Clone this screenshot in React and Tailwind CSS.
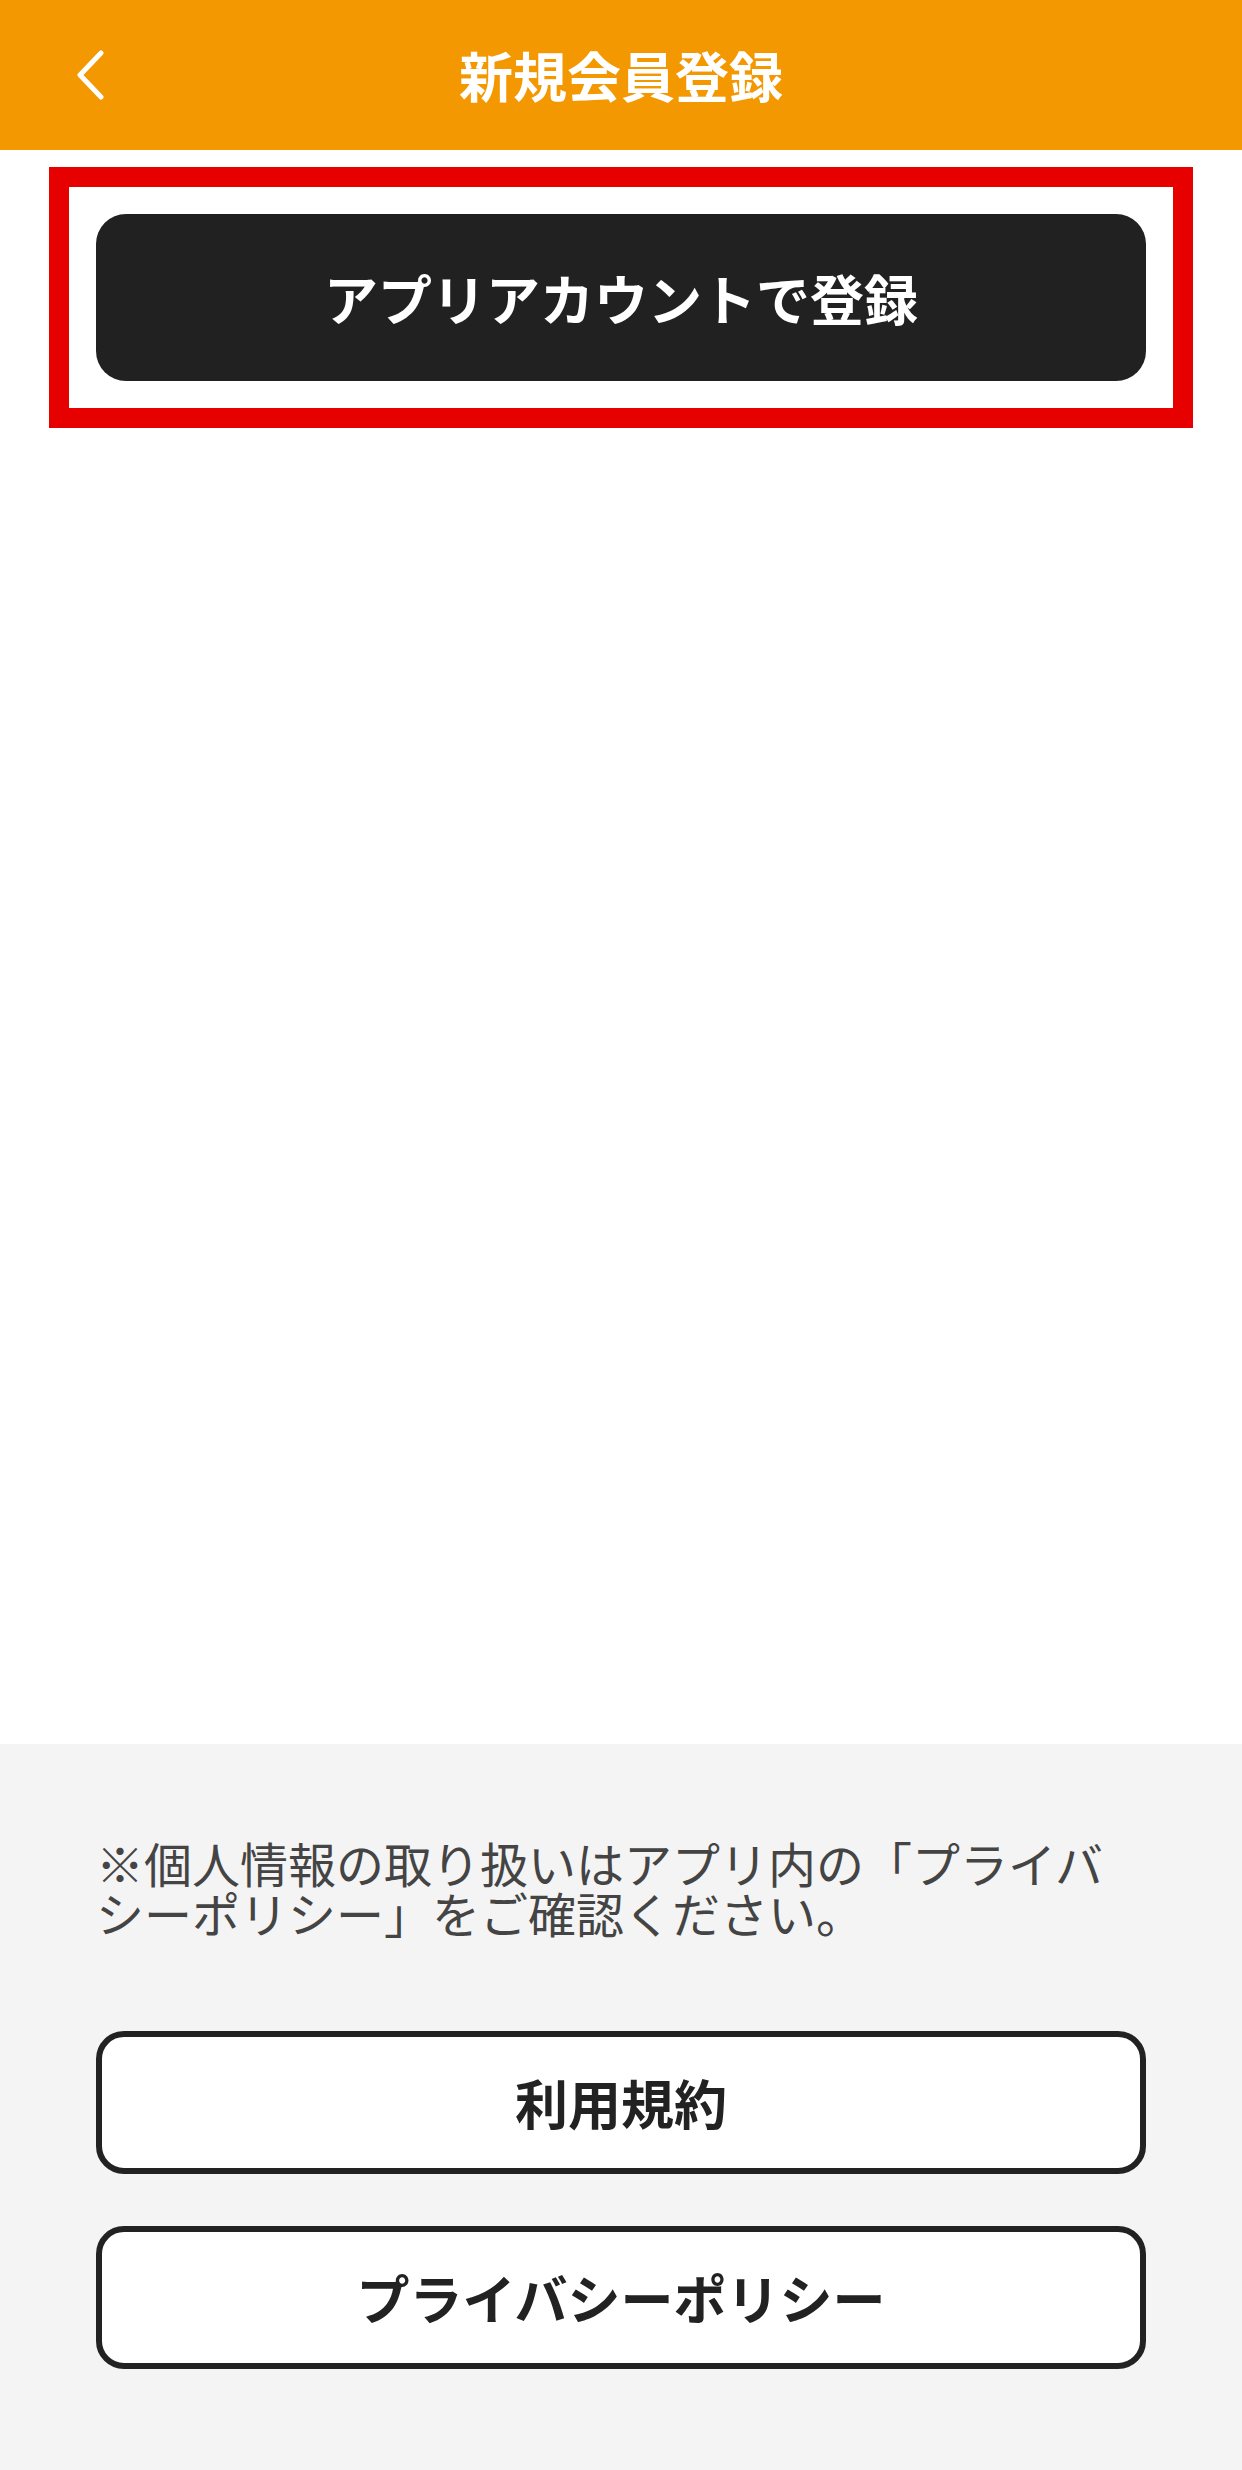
const jp = "font-['Noto_Sans_CJK_JP','Noto_Sans',sans-serif]";

const BackIcon = () => (
  <svg viewBox="0 0 30 50" className="w-[30px] h-[50px]" fill="none">
    <path d="M25 3 L4 25 L25 47" stroke="white" strokeWidth="5" strokeLinecap="round" strokeLinejoin="round" />
  </svg>
);

const App = () => {
  return (
    <div className={`w-[1242px] h-[2470px] flex flex-col bg-white ${jp}`}>
      <header className="relative h-[150px] shrink-0 bg-[#f39800] flex items-center justify-center">
        <button className="absolute left-[76px] top-[50px]">
          <BackIcon />
        </button>
        <h1 className="text-white font-bold text-[54px] leading-none">新規会員登録</h1>
      </header>

      <main className="flex-1 px-[49px] pt-[17px]">
        <div className="border-[20px] border-[#e60000] p-[27px]">
          <button className="w-full h-[167px] rounded-[30px] bg-[#212121] text-white font-bold text-[54px] leading-none flex items-center justify-center">
            アプリアカウントで登録
          </button>
        </div>
      </main>

      <footer className="h-[726px] shrink-0 bg-[#f4f4f4] px-[96px] pt-[93px] flex flex-col">
        <p className="text-[48px] leading-[50px] text-[#444444]">
          ※個人情報の取り扱いはアプリ内の「プライバシーポリシー」をご確認ください。
        </p>
        <div className="mt-[94px] flex flex-col gap-[52px]">
          <button className="h-[143px] rounded-[28px] border-[6px] border-[#222222] bg-white text-[#222222] font-bold text-[53px] leading-none flex items-center justify-center">
            利用規約
          </button>
          <button className="h-[143px] rounded-[28px] border-[6px] border-[#222222] bg-white text-[#222222] font-bold text-[53px] leading-none flex items-center justify-center">
            プライバシーポリシー
          </button>
        </div>
      </footer>
    </div>
  );
};

export default App;
